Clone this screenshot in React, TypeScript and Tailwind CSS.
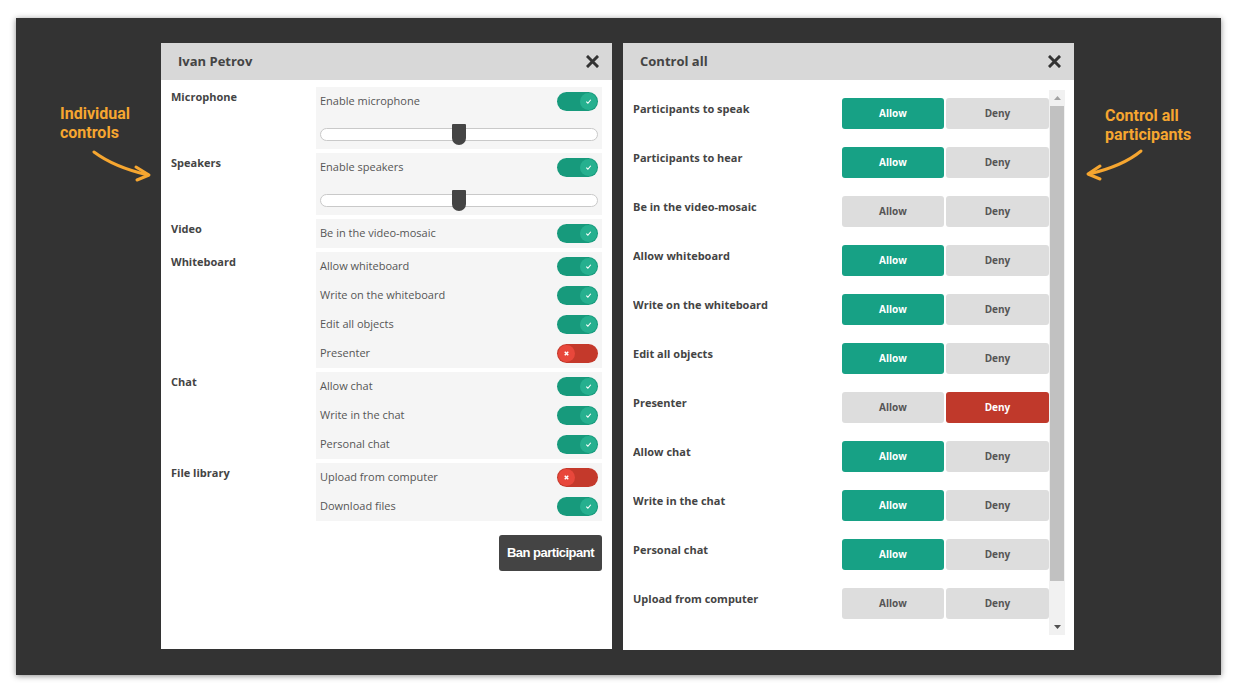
import React from 'react'

const font = { fontFamily: '"Open Sans", "Liberation Sans", sans-serif' }

function CloseIcon() {
  return (
    <svg width="13" height="13" viewBox="0 0 13 13" className="text-[#333]">
      <path d="M2 2 L11 11 M11 2 L2 11" stroke="currentColor" strokeWidth="3" strokeLinecap="square" />
    </svg>
  )
}

function Toggle({ on }: { on: boolean }) {
  return (
    <span
      className={`flex h-[19px] w-[41px] items-center rounded-full px-[1px] ${
        on ? 'justify-end bg-[#179a7c]' : 'justify-start bg-[#c4392b]'
      }`}
    >
      <span
        className={`flex h-[17px] w-[17px] items-center justify-center rounded-full ${
          on ? 'bg-[#26b08f]' : 'bg-[#e8473b]'
        }`}
      >
        {on ? (
          <svg width="7" height="7" viewBox="0 0 8 8">
            <path d="M1.5 4.2 L3.3 6 L6.6 2" stroke="#fff" strokeWidth="1.3" fill="none" />
          </svg>
        ) : (
          <svg width="7" height="7" viewBox="0 0 8 8">
            <path d="M2 2 L6 6 M6 2 L2 6" stroke="#fff" strokeWidth="1.7" />
          </svg>
        )}
      </span>
    </span>
  )
}

function ToggleRow({ label, on }: { label: string; on: boolean }) {
  return (
    <div className="flex h-[29px] items-center justify-between pl-[4px] pr-[4px]">
      <span className="text-[11px] text-[#555]">{label}</span>
      <Toggle on={on} />
    </div>
  )
}

function Slider() {
  return (
    <div className="flex h-[33px] items-center px-[4px] pt-[4px]">
      <div className="relative h-[13px] flex-1 rounded-full border border-[#c9c9c9] bg-white">
        <div className="absolute left-[131px] top-[-5px] h-[21px] w-[14px] rounded-b-[7px] rounded-t-[1px] bg-[#454545]" />
      </div>
    </div>
  )
}

function Group({ title, children }: { title: string; children: React.ReactNode }) {
  return (
    <div className="flex">
      <div className="w-[145px] pt-[2px] text-[11px] font-bold text-[#444]">{title}</div>
      <div className="flex-1 bg-[#f5f5f5]">{children}</div>
    </div>
  )
}

function Header({ title }: { title: string }) {
  return (
    <div className="flex h-[37px] shrink-0 items-center justify-between bg-[#d8d8d8] pl-[17px] pr-[13px]">
      <span className="text-[13px] font-bold text-[#444]">{title}</span>
      <CloseIcon />
    </div>
  )
}

function IndividualPanel() {
  return (
    <div className="flex h-[606px] w-[451px] flex-col bg-white" style={font}>
      <Header title="Ivan Petrov" />
      <div className="flex flex-col gap-[4px] px-[10px] pt-[7px]">
        <Group title="Microphone">
          <ToggleRow label="Enable microphone" on />
          <Slider />
        </Group>
        <Group title="Speakers">
          <ToggleRow label="Enable speakers" on />
          <Slider />
        </Group>
        <Group title="Video">
          <ToggleRow label="Be in the video-mosaic" on />
        </Group>
        <Group title="Whiteboard">
          <ToggleRow label="Allow whiteboard" on />
          <ToggleRow label="Write on the whiteboard" on />
          <ToggleRow label="Edit all objects" on />
          <ToggleRow label="Presenter" on={false} />
        </Group>
        <Group title="Chat">
          <ToggleRow label="Allow chat" on />
          <ToggleRow label="Write in the chat" on />
          <ToggleRow label="Personal chat" on />
        </Group>
        <Group title="File library">
          <ToggleRow label="Upload from computer" on={false} />
          <ToggleRow label="Download files" on />
        </Group>
        <div className="flex justify-end pt-[10px]">
          <button
            className="h-[36px] w-[103px] rounded-[3px] bg-[#444] text-[13px] font-bold tracking-[-0.5px] text-white"
            style={{ fontFamily: '"Liberation Sans", Arial, sans-serif' }}
          >
            Ban participant
          </button>
        </div>
      </div>
    </div>
  )
}

type Mode = 'allow' | 'deny' | 'none'

const controls: { label: string; mode: Mode }[] = [
  { label: 'Participants to speak', mode: 'allow' },
  { label: 'Participants to hear', mode: 'allow' },
  { label: 'Be in the video-mosaic', mode: 'none' },
  { label: 'Allow whiteboard', mode: 'allow' },
  { label: 'Write on the whiteboard', mode: 'allow' },
  { label: 'Edit all objects', mode: 'allow' },
  { label: 'Presenter', mode: 'deny' },
  { label: 'Allow chat', mode: 'allow' },
  { label: 'Write in the chat', mode: 'allow' },
  { label: 'Personal chat', mode: 'allow' },
  { label: 'Upload from computer', mode: 'none' },
]

function ControlRow({ label, mode }: { label: string; mode: Mode }) {
  return (
    <div className="flex h-[49px] shrink-0 items-start pt-[8px]">
      <div className="flex-1 pt-[3px] text-[11px] font-bold text-[#444]">{label}</div>
      <div className="flex gap-[2px]">
        <div
          className={`flex h-[31px] w-[102px] items-center justify-center rounded-[3px] text-[10px] font-bold ${
            mode === 'allow' ? 'bg-[#17a185] text-white' : 'bg-[#dddddd] text-[#555]'
          }`}
        >
          Allow
        </div>
        <div
          className={`flex h-[31px] w-[103px] items-center justify-center rounded-[3px] text-[10px] font-bold ${
            mode === 'deny' ? 'bg-[#c0392b] text-white' : 'bg-[#dddddd] text-[#555]'
          }`}
        >
          Deny
        </div>
      </div>
    </div>
  )
}

function FakeScrollbar() {
  return (
    <div className="flex w-[16px] flex-col bg-[#f1f1f1]">
      <div className="flex h-[16px] items-center justify-center">
        <svg width="7" height="4" viewBox="0 0 7 4">
          <path d="M0 4 L3.5 0 L7 4 Z" fill="#a3a3a3" />
        </svg>
      </div>
      <div className="mx-[1px] h-[475px] bg-[#c1c1c1]" />
      <div className="flex-1" />
      <div className="flex h-[16px] items-center justify-center">
        <svg width="7" height="4" viewBox="0 0 7 4">
          <path d="M0 0 L3.5 4 L7 0 Z" fill="#505050" />
        </svg>
      </div>
    </div>
  )
}

function ControlAllPanel() {
  return (
    <div className="flex h-[607px] w-[451px] flex-col bg-white" style={font}>
      <Header title="Control all" />
      <div className="flex flex-1 pb-[15px] pl-[10px] pr-[9px] pt-[10px]">
        <div className="flex flex-1 flex-col overflow-hidden">
          {controls.map((c) => (
            <ControlRow key={c.label} label={c.label} mode={c.mode} />
          ))}
        </div>
        <FakeScrollbar />
      </div>
    </div>
  )
}

const note = { fontFamily: 'Roboto, "Liberation Sans", sans-serif' }

export default function App() {
  return (
    <div className="h-[693px] w-[1237px] bg-white pl-[16px] pt-[18px]">
      <div className="flex h-[657px] w-[1205px] bg-[#333] pt-[25px] shadow-[0_1px_6px_rgba(0,0,0,0.45)]">
        {/* left note */}
        <div className="w-[145px] pl-[44px] pt-[61px]" style={note}>
          <p className="text-[16px] font-bold leading-[19px] text-[#f6a630]">
            Individual
            <br />
            controls
          </p>
          <svg width="64" height="34" viewBox="0 0 64 34" className="ml-[32px] mt-[7px]">
            <path d="M2 3 Q 22 18 56 26" stroke="#f6a630" strokeWidth="3" fill="none" strokeLinecap="round" />
            <path d="M44 18 L57 26 L45 31" stroke="#f6a630" strokeWidth="3" fill="none" strokeLinecap="round" strokeLinejoin="round" />
          </svg>
        </div>

        <IndividualPanel />
        <div className="w-[11px]" />
        <ControlAllPanel />

        {/* right note */}
        <div className="flex-1 pl-[31px] pt-[63px]" style={note}>
          <p className="text-[16px] font-bold leading-[19px] text-[#f6a630]">
            Control all
            <br />
            participants
          </p>
          <svg width="64" height="34" viewBox="0 0 64 34" className="-ml-[22px] mt-[4px]">
            <path d="M58 3 Q 40 18 6 26" stroke="#f6a630" strokeWidth="3" fill="none" strokeLinecap="round" />
            <path d="M17 18 L5 26 L17 31" stroke="#f6a630" strokeWidth="3" fill="none" strokeLinecap="round" strokeLinejoin="round" />
          </svg>
        </div>
      </div>
    </div>
  )
}
